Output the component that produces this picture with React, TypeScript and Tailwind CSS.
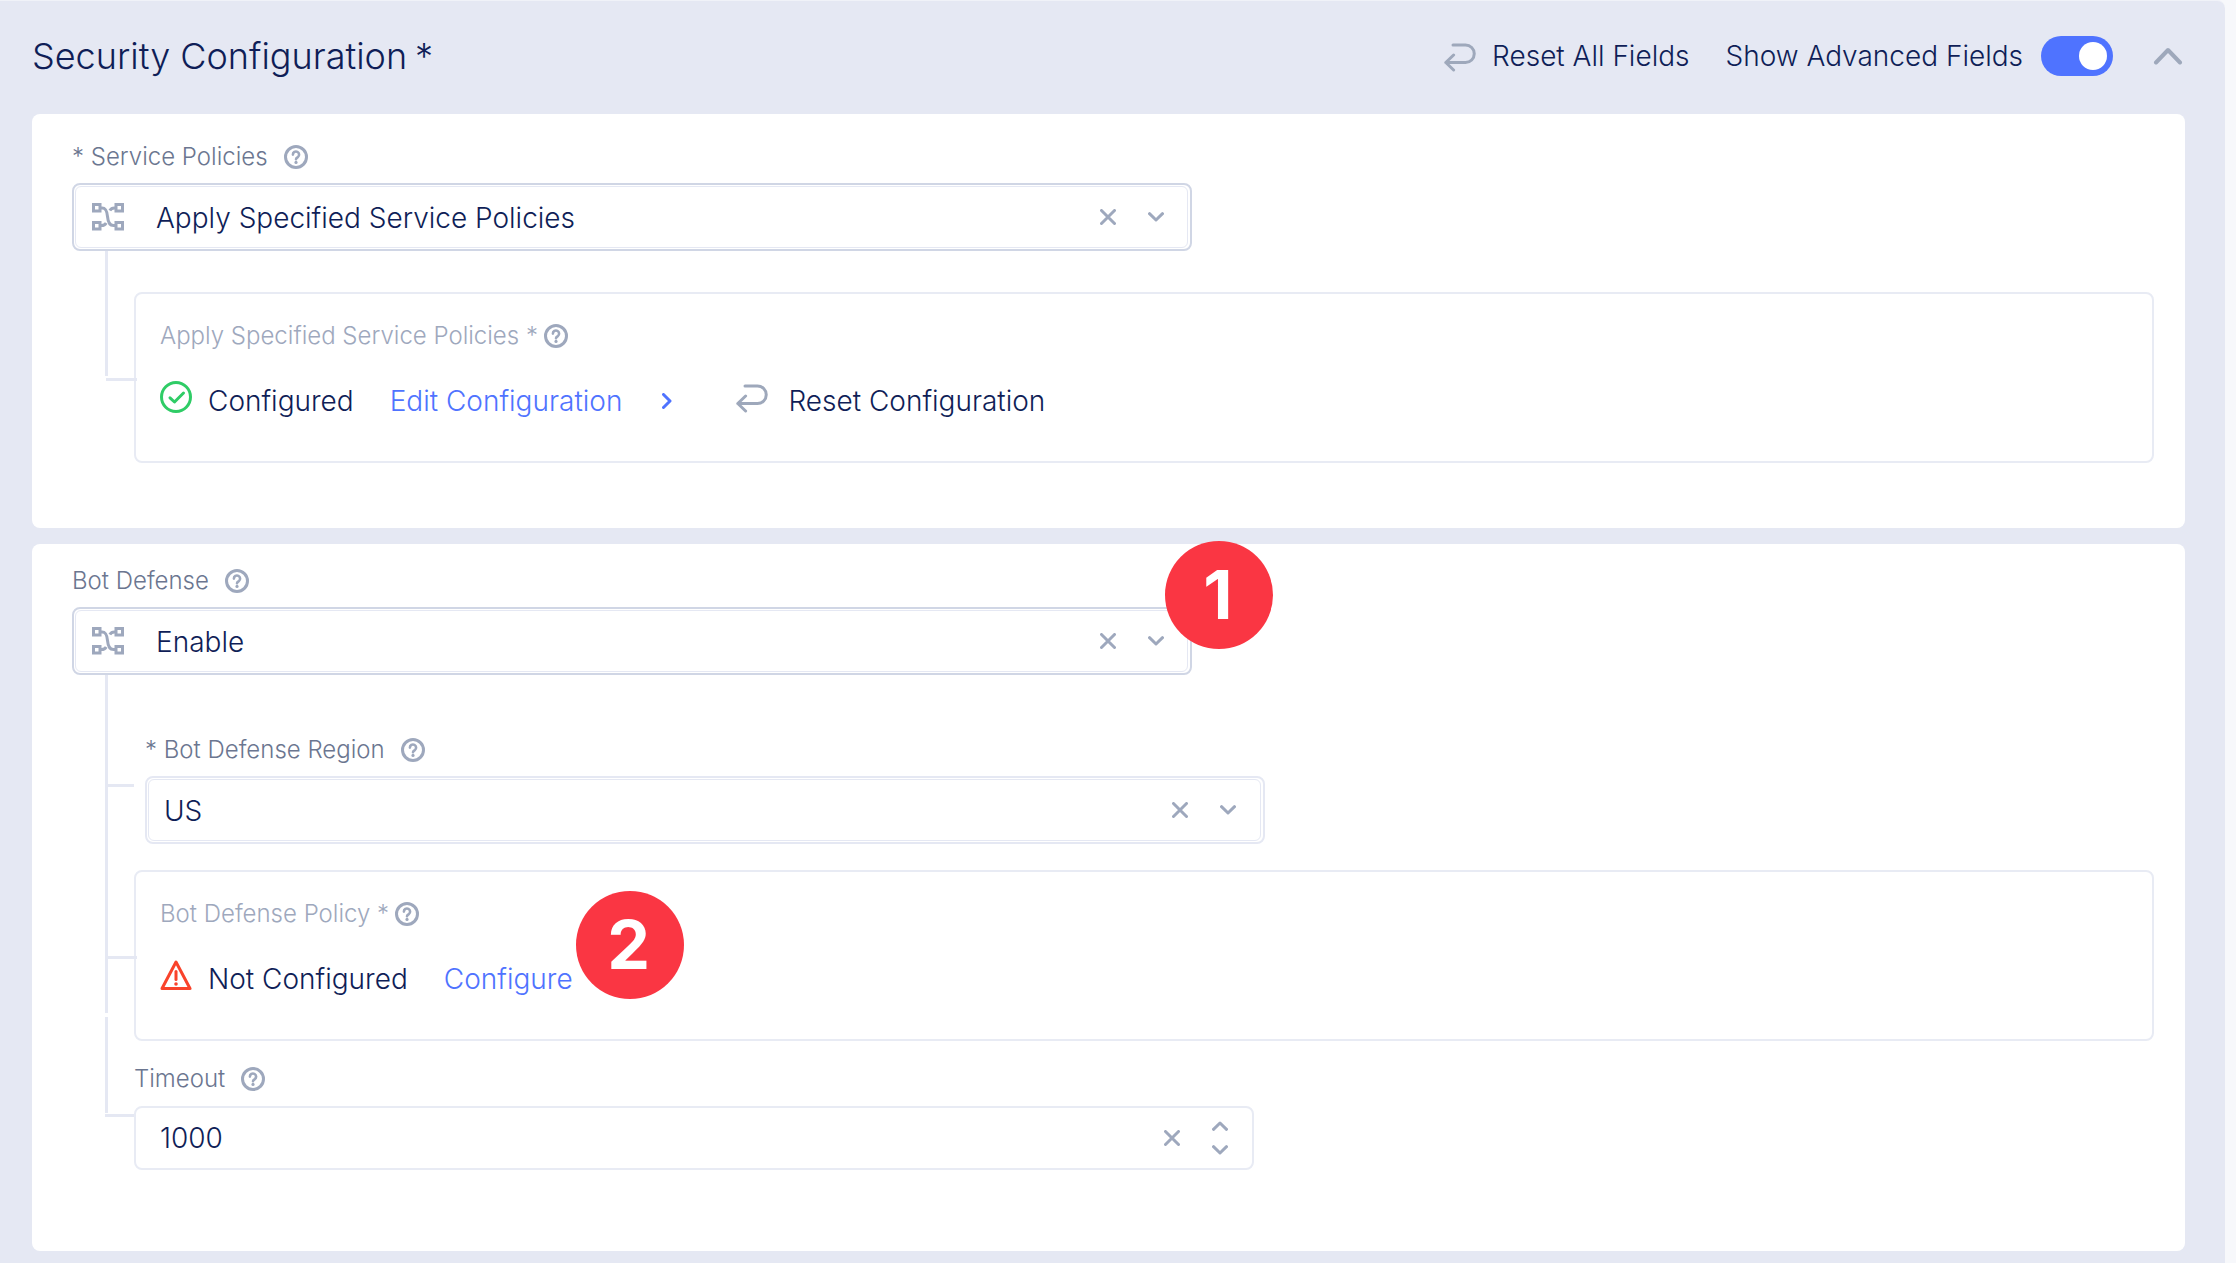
import { useState } from "react";
import type { ReactNode } from "react";

function HelpIcon() {
  return (
    <svg viewBox="0 0 24 24" className="size-6 shrink-0 text-[#9ea8bd]" fill="none" stroke="currentColor" aria-hidden="true">
      <circle cx="12" cy="12" r="10.5" strokeWidth="3" />
      <path d="M8.9 9.6a3.1 3.1 0 1 1 4.9 2.5c-1.2.8-1.8 1.2-1.8 2.2" strokeWidth="2.6" strokeLinecap="round" />
      <circle cx="12" cy="17.4" r="1.6" fill="currentColor" stroke="none" />
    </svg>
  );
}

function ResetIcon() {
  return (
    <svg viewBox="0 0 32 32" className="size-8 shrink-0 text-[#9ea8bb]" fill="none" stroke="currentColor" strokeWidth="3" strokeLinecap="round" strokeLinejoin="round" aria-hidden="true">
      <path d="M9 5h12.500a8.700 8.700 0 0 1 0 17.500H1.800M9.600 15 1.800 22.500l7.800 7.500" />
    </svg>
  );
}

function NodesIcon() {
  return (
    <svg viewBox="0 0 32 28" className="h-7 w-8 shrink-0 text-[#9ea8bd]" fill="none" stroke="currentColor" strokeWidth="3" aria-hidden="true">
      <rect x="1.5" y="1.5" width="6.5" height="6.5" />
      <rect x="24" y="1.5" width="6.5" height="6.5" />
      <rect x="1.5" y="19.5" width="6.5" height="6.5" />
      <rect x="24" y="19.5" width="6.5" height="6.5" />
      <path d="M8 5h2c4 0 5 3 5.500 8.500C16 19 17.500 22.500 21.500 22.500H24M24 5h-1.500c-2.200 0-3.700.8-4.700 2.600M8 22.500h1.500c2.200 0 3.700-.8 4.700-2.600" />
    </svg>
  );
}

function CrossIcon() {
  return (
    <svg viewBox="0 0 16 16" className="size-4" fill="none" stroke="currentColor" strokeWidth="3" strokeLinecap="round" aria-hidden="true">
      <path d="m1.500 1.500 13 13M14.500 1.500l-13 13" />
    </svg>
  );
}

function ChevronDown() {
  return (
    <svg viewBox="0 0 16 10" className="h-2.5 w-4 shrink-0 text-[#9ea8bd]" fill="none" stroke="currentColor" strokeWidth="3" strokeLinecap="round" strokeLinejoin="round" aria-hidden="true">
      <path d="m1.500 1.700 6.500 6.300 6.500-6.300" />
    </svg>
  );
}

function ChevronUp() {
  return (
    <svg viewBox="0 0 16 10" className="h-2.5 w-4 shrink-0" fill="none" stroke="currentColor" strokeWidth="3" strokeLinecap="round" strokeLinejoin="round" aria-hidden="true">
      <path d="m1.500 8.300 6.500-6.300 6.500 6.300" />
    </svg>
  );
}

function CheckIcon() {
  return (
    <svg viewBox="0 0 32 32" className="size-8 shrink-0 text-[#2fcc66]" fill="none" stroke="currentColor" strokeWidth="3" strokeLinecap="round" strokeLinejoin="round" aria-hidden="true">
      <circle cx="16" cy="16" r="14.500" />
      <path d="m10 16.800 4.500 4.200 9-9" />
    </svg>
  );
}

function WarningIcon() {
  return (
    <svg viewBox="0 0 32 32" className="size-8 shrink-0 text-[#f9432b]" fill="none" stroke="currentColor" strokeWidth="3" strokeLinejoin="round" aria-hidden="true">
      <path d="M16 3 30 29.500H2Z" />
      <path d="M16 12.500v8" strokeLinecap="round" />
      <circle cx="16" cy="25" r="1.800" fill="currentColor" stroke="none" />
    </svg>
  );
}

function FieldLabel({ htmlFor, children }: { htmlFor: string; children: ReactNode }) {
  return (
    <div className="flex items-center gap-4">
      <label htmlFor={htmlFor} className="text-2xl leading-9 text-[#6b7690]">
        {children}
      </label>
      <button type="button" aria-label="Help">
        <HelpIcon />
      </button>
    </div>
  );
}

function SelectField({ id, options, nodes, badge }: { id: string; options: string[]; nodes?: boolean; badge?: string }) {
  const [value, setValue] = useState(options[0]);
  return (
    <div
      className={
        "relative mt-2 h-[68px] w-full max-w-[1120px] rounded-lg border-2 p-px pr-0.5 " +
        (nodes ? "border-[#d0d6e5]" : "border-[#e5e8f3]")
      }
    >
      <div className={"flex h-full items-center rounded-md border border-[#e5e8f3] " + (nodes ? "pl-4 pr-[23px]" : "pl-[15px] pr-6")}>
        {nodes && (
          <span className="mr-8">
            <NodesIcon />
          </span>
        )}
        <select
          id={id}
          value={value}
          onChange={(e) => setValue(e.target.value)}
          className="min-w-0 flex-1 appearance-none bg-transparent pt-0.5 text-[28px] leading-10 text-[#0f1e57] outline-none"
        >
          {options.map((o) => (
            <option key={o}>{o}</option>
          ))}
        </select>
        <button type="button" aria-label="Clear" className="mr-8 text-[#9ea8bd]">
          <CrossIcon />
        </button>
        <ChevronDown />
      </div>
      {badge && <Badge className="-right-[83px] -top-[68px]">{badge}</Badge>}
    </div>
  );
}

function Badge({ className, children }: { className: string; children: ReactNode }) {
  return (
    <span className={"absolute z-10 flex size-[108px] items-center justify-center rounded-full bg-[#fa3643] pb-0.5 pr-0.5 text-[68px] font-bold leading-none text-white " + className}>
      {children}
    </span>
  );
}

function ConfigBox({ title, children }: { title: string; children: ReactNode }) {
  return (
    <div className="rounded-lg border-2 border-[#e8ebf4] px-6 pb-10 pt-6">
      <div className="flex items-center gap-1.5">
        <h3 className="text-2xl leading-9 text-[#9ea8bd]">{title}</h3>
        <button type="button" aria-label="Help">
          <HelpIcon />
        </button>
      </div>
      <div className="mt-[27px] flex h-10 items-start text-[28px] leading-10">{children}</div>
    </div>
  );
}

export default function App() {
  const [advanced, setAdvanced] = useState(true);
  const [timeout, setTimeoutValue] = useState("1000");
  return (
    <div className="min-h-screen bg-[#f7f8fb] pr-[11px] font-['Inter',sans-serif] font-light text-[#0f1e57]">
      <main className="min-h-screen rounded-tr-lg border-t border-[#f0f2f8] bg-[#e5e8f3] pb-3 pl-8 pr-10">
        <header className="flex h-[113px] items-center justify-between pb-1">
          <h1 className="flex gap-2 text-4xl">
            <span>Security Configuration</span>
            <span>*</span>
          </h1>
          <div className="flex items-center text-[28px] leading-10">
            <button type="button" className="mr-9 flex items-center gap-4">
              <ResetIcon />
              Reset All Fields
            </button>
            <label className="flex cursor-pointer items-center gap-[18px]">
              Show Advanced Fields
              <input
                type="checkbox"
                role="switch"
                checked={advanced}
                onChange={(e) => setAdvanced(e.target.checked)}
                className="peer sr-only"
              />
              <span className="flex h-10 w-[72px] items-center rounded-full bg-[#9ea8bd] px-1.5 peer-checked:justify-end peer-checked:bg-[#4f73ff]">
                <span className="size-7 rounded-full bg-white" />
              </span>
            </label>
            <button type="button" aria-label="Collapse section" className="ml-10 mr-0.5 text-[#9ea8bb]">
              <svg viewBox="0 0 30 18" className="h-[18px] w-[30px]" fill="none" stroke="currentColor" strokeWidth="4" strokeLinecap="round" strokeLinejoin="round" aria-hidden="true">
                <path d="M3 15.500 15 3l12 12.500" />
              </svg>
            </button>
          </div>
        </header>

        <section className="rounded-lg bg-white pb-[65px] pl-10 pr-[31px] pt-[25px]">
          <FieldLabel htmlFor="service-policies">* Service Policies</FieldLabel>
          <SelectField id="service-policies" options={["Apply Specified Service Policies"]} nodes />
          <div className="flex">
            <div className="ml-[33px] mr-[26px] h-[125px] w-[3px] bg-[#e5e8f3]" />
            <div className="relative min-w-0 flex-1 pt-[41px]">
              <ConfigBox title="Apply Specified Service Policies *">
                <span className="mr-4">
                  <CheckIcon />
                </span>
                <span className="mr-9">Configured</span>
                <a href="#edit" className="mr-16 flex items-center gap-10 text-[#4f73ff]">
                  Edit Configuration
                  <svg viewBox="0 0 10 16" className="h-4 w-2.5" fill="none" stroke="currentColor" strokeWidth="3" strokeLinecap="round" strokeLinejoin="round" aria-hidden="true">
                    <path d="m1.500 1.500 6.500 6.500-6.500 6.500" />
                  </svg>
                </a>
                <button type="button" className="flex items-start gap-5">
                  <ResetIcon />
                  Reset Configuration
                </button>
              </ConfigBox>
              <span className="absolute -left-7 top-[127px] h-[3px] w-[31px] bg-[#e5e8f3]" />
            </div>
          </div>
        </section>

        <section className="mt-4 rounded-lg bg-white pb-[81px] pl-10 pr-[31px] pt-[19px]">
          <FieldLabel htmlFor="bot-defense">Bot Defense</FieldLabel>
          <SelectField id="bot-defense" options={["Enable", "Disable"]} nodes badge="1" />
          <div className="flex">
            <div className="ml-[33px] mr-[26px] flex w-[3px] flex-col gap-1">
              <div className="h-[338px] bg-[#e5e8f3]" />
              <div className="h-[96px] bg-[#e5e8f3]" />
            </div>
            <div className="min-w-0 flex-1">
              <div className="relative pl-[11px] pt-[57px]">
                <FieldLabel htmlFor="region">* Bot Defense Region</FieldLabel>
                <SelectField id="region" options={["US", "EU", "Asia"]} />
                <span className="absolute -left-7 top-[109px] h-[3px] w-7 bg-[#e5e8f3]" />
              </div>
              <div className="relative mt-[26px]">
                <ConfigBox title="Bot Defense Policy *">
                  <span className="mr-4">
                    <WarningIcon />
                  </span>
                  <span className="mr-9">Not Configured</span>
                  <a href="#configure" className="relative text-[#4f73ff]">
                    Configure
                    <Badge className="-right-[111px] -top-[68px]">2</Badge>
                  </a>
                </ConfigBox>
                <span className="absolute -left-7 top-[86px] h-[3px] w-[31px] bg-[#e5e8f3]" />
              </div>
              <div className="relative pt-5">
                <FieldLabel htmlFor="timeout">Timeout</FieldLabel>
                <div className="mt-[9px] flex h-16 w-full max-w-[1120px] items-center rounded-lg border-2 border-[#e8ebf4] px-6">
                  <input
                    id="timeout"
                    type="text"
                    inputMode="numeric"
                    value={timeout}
                    onChange={(e) => setTimeoutValue(e.target.value)}
                    className="min-w-0 flex-1 bg-transparent text-[28px] leading-10 text-[#0f1e57] outline-none"
                  />
                  <button type="button" aria-label="Clear" className="mr-8 text-[#9ea8bd]" onClick={() => setTimeoutValue("")}>
                    <CrossIcon />
                  </button>
                  <span className="flex flex-col gap-3.5 text-[#9ea8bd]">
                    <button type="button" aria-label="Increase" onClick={() => setTimeoutValue(String(Number(timeout) + 1))}>
                      <ChevronUp />
                    </button>
                    <button type="button" aria-label="Decrease" onClick={() => setTimeoutValue(String(Number(timeout) - 1))}>
                      <ChevronDown />
                    </button>
                  </span>
                </div>
                <span className="absolute -left-[29px] top-[73px] h-[3px] w-[29px] bg-[#e5e8f3]" />
              </div>
            </div>
          </div>
        </section>
      </main>
    </div>
  );
}
